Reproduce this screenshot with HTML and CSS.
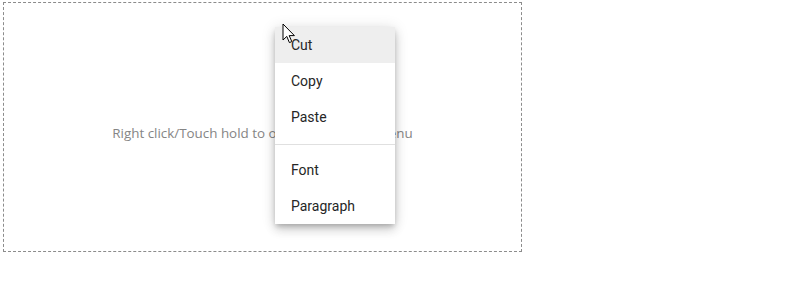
FILE: index.html
```html
<!DOCTYPE html>
<html lang="en">
<head>
  <meta charset="UTF-8">
  <meta name="viewport" content="width=device-width, initial-scale=1.0">
  <title>ContextMenu</title>
  <link rel="stylesheet" href="styles.css">
</head>
<body>

  <!-- Target area -->
  <div class="target">
    <span class="hint">Right click/Touch hold to open the ContextMenu</span>

    <!-- Context menu -->
    <ul class="menu">
      <li class="menu-item focused">Cut</li>
      <li class="menu-item">Copy</li>
      <li class="menu-item">Paste</li>
      <li class="separator"></li>
      <li class="menu-item">Font</li>
      <li class="menu-item">Paragraph</li>
    </ul>

    <!-- Mouse pointer -->
    <svg class="cursor" width="14" height="22" viewBox="0 0 14 22">
      <path d="M1 1 L1 17 L4.8 13.4 L7.4 19.6 L9.8 18.6 L7.2 12.6 L12.4 12.6 Z" fill="#fff" stroke="#000" stroke-width="1" stroke-linejoin="miter"/>
    </svg>
  </div>

</body>
</html>
```

FILE: styles.css
```css
body {
  margin: 0;
  padding: 0;
  background-color: #fff;
  font-family: Roboto, "Noto Sans", sans-serif;
}
.target {
  position: relative;
  width: 517px;
  height: 248px;
  margin: 2px 0 0 3px;
  border: 1px dashed #8c8c8c;
  display: flex;
  align-items: center;
  justify-content: center;
}
.hint {
  font-family: "Open Sans", "Noto Sans", sans-serif;
  font-size: 13.4px;
  color: #858585;
  margin-top: 12px;
}
.menu {
  position: absolute;
  left: 271px;
  top: 24px;
  width: 120px;
  margin: 0;
  padding: 0;
  list-style: none;
  background-color: #fff;
  box-shadow: 0 3px 5px -1px rgba(0, 0, 0, 0.2), 0 6px 10px 0 rgba(0, 0, 0, 0.14), 0 1px 14px 0 rgba(0, 0, 0, 0.12);
}
.menu-item {
  height: 36px;
  line-height: 36px;
  padding: 0 16px;
  font-size: 14px;
  color: #262626;
}
.menu-item.focused {
  background-color: #eee;
}
.separator {
  height: 1px;
  margin: 9px 0 7px;
  background-color: #e0e0e0;
}
.cursor {
  position: absolute;
  left: 278px;
  top: 20px;
}
```
